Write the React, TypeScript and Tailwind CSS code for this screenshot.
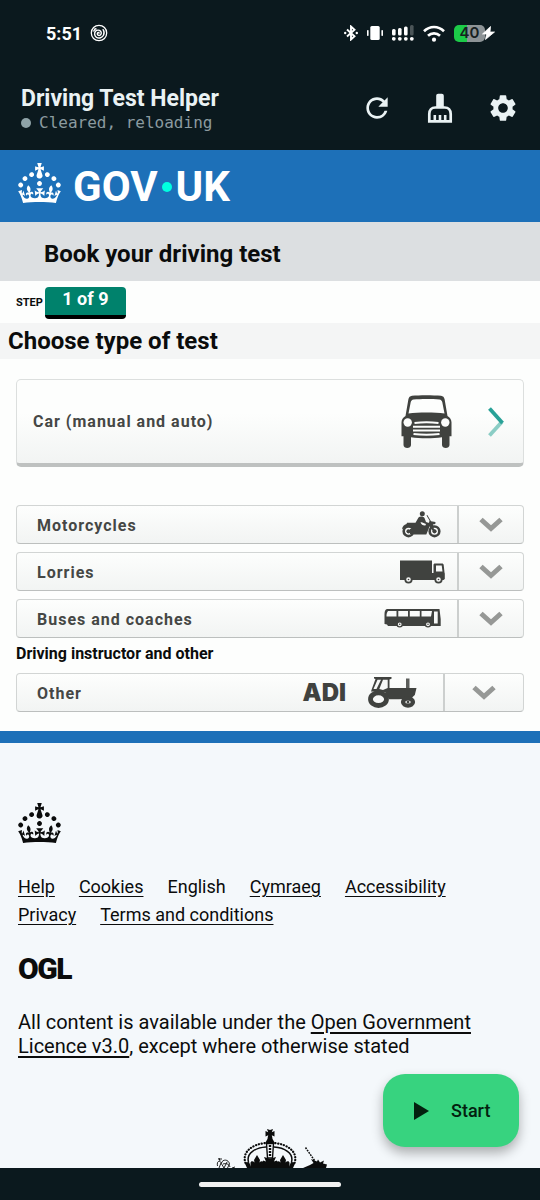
import { MdRefresh, MdSettings } from 'react-icons/md';
import type { ReactNode } from 'react';

const CROWN =
  'M22.6 10.4c-1 .4-2-.1-2.4-1-.4-.9.1-2 1-2.4.9-.4 2 .1 2.4 1s-.1 2-1 2.4m-5.9 6.7c-.9.4-2-.1-2.4-1-.4-.9.1-2 1-2.4.9-.4 2 .1 2.4 1s-.1 2-1 2.4m10.8-3.7c-1 .4-2-.1-2.4-1-.4-.9.1-2 1-2.4.9-.4 2 .1 2.4 1s0 2-1 2.4m3.3 4.8c-1 .4-2-.1-2.4-1-.4-.9.1-2 1-2.4.9-.4 2 .1 2.4 1s-.1 2-1 2.4M17 4.7l2.3 1.2V2.5l-2.3.7-.2-.2.9-3h-3.4l.9 3-.2.2c-.1.1-2.3-.7-2.3-.7v3.4L15 4.7c.1.1.1.2.2.2l-1.3 4c-.1.2-.1.4-.1.6 0 1.1.8 2 1.9 2.2h.7c1-.2 1.9-1.1 1.9-2.1 0-.2 0-.4-.1-.6l-1.3-4c-.1-.2 0-.2.1-.3m-7.6 5.7c.9.4 2-.1 2.4-1 .4-.9-.1-2-1-2.4-.9-.4-2 .1-2.4 1s0 2 1 2.4m-5 3c.9.4 2-.1 2.4-1 .4-.9-.1-2-1-2.4-.9-.4-2 .1-2.4 1s.1 2 1 2.4m-3.2 4.8c.9.4 2-.1 2.4-1 .4-.9-.1-2-1-2.4-.9-.4-2 .1-2.4 1s0 2 1 2.4m14.8 11c4.4 0 8.6.3 12.3.8 1.1-4.5 2.4-7 3.7-8.8l-2.5-.9c.2 1.3.3 1.9 0 2.7-.4-.4-.8-1.1-1.1-2.3l-1.2 4c.7-.5 1.3-.8 2-.9-1.1 2.5-2.6 3.1-3.5 3-1.1-.2-1.7-1.2-1.5-2.1.3-1.2 1.5-1.5 2.1-.1 1.1-2.3-.8-3-2-2.3 1.9-1.9 2.1-3.5.6-5.6-2.1 1.6-2.1 3.2-1.2 5.5-1.2-1.4-3.2-.6-2.5 1.6.9-1.4 2.1-.5 1.9.8-.2 1.1-1.7 2.1-3.5 1.9-2.7-.2-2.9-2.1-2.9-3.6.7-.1 1.9.5 2.9 1.9l.4-4.3c-1.1 1.1-2.1 1.4-3.2 1.4.4-1.2 2.1-3 2.1-3h-5.4s1.7 1.9 2.1 3c-1.1 0-2.1-.2-3.2-1.4l.4 4.3c1-1.4 2.2-2 2.9-1.9-.1 1.5-.2 3.4-2.9 3.6-1.9.2-3.4-.8-3.5-1.9-.2-1.3 1-2.2 1.9-.8.7-2.3-1.2-3-2.5-1.6.9-2.2.9-3.9-1.2-5.5-1.5 2-1.3 3.7.6 5.6-1.2-.7-3.1 0-2 2.3.6-1.4 1.8-1.1 2.1.1.2.9-.3 1.9-1.5 2.1-.9.2-2.4-.5-3.5-3 .6 0 1.2.3 2 .9l-1.2-4c-.3 1.1-.7 1.9-1.1 2.3-.3-.8-.2-1.4 0-2.7l-2.9.9C1.3 23 2.6 25.5 3.7 30c3.7-.5 7.9-.8 12.3-.8';

function Crown() {
  return (
    <svg viewBox="0 0 32 30" className="h-10 w-[43px]" fill="currentColor" aria-hidden="true">
      <path fillRule="evenodd" d={CROWN} />
    </svg>
  );
}

function SpiralIcon() {
  return (
    <svg viewBox="0 0 18 18" className="size-[18px]" fill="none" stroke="currentColor" aria-hidden="true">
      <circle cx="9" cy="9" r="7.7" strokeWidth="1.3" />
      <path
        strokeWidth="1.4"
        strokeLinecap="round"
        d="M9 9.2c.2-1-1.5-1.100-1.700.3-.2 1.500 1.200 2.200 2.400 1.800 1.700-.6 2-2.700.9-4C9.200 5.700 6.800 5.800 5.500 7.300c-1.500 1.900-1 4.700 1 6 2.500 1.400 5.700.5 7-2 1-2 .7-4-.4-5.600"
      />
      <path strokeWidth="1.4" d="M3.500 7.500 5 5l1.500-.3" />
    </svg>
  );
}

function StatusIcons() {
  return (
    <div className="flex items-center gap-[9px]" aria-hidden="true">
      <svg viewBox="0 0 14 16" className="h-4 w-3.5" fill="none" stroke="currentColor" strokeWidth="1.900">
        <path d="M3 4.500 10.500 11.300 7 14.500V1.500l3.500 3.200L3 11.500" />
        <circle cx="1.200" cy="8" r="1.200" fill="currentColor" stroke="none" />
        <circle cx="12.800" cy="8" r="1.200" fill="currentColor" stroke="none" />
      </svg>
      <svg viewBox="0 0 16 14" className="h-3.5 w-4" fill="currentColor">
        <rect x="3.300" y="0" width="9.400" height="14" rx="1.500" />
        <rect x="0" y="4" width="1.600" height="6" rx=".7" />
        <rect x="14.400" y="4" width="1.600" height="6" rx=".7" />
      </svg>
      <svg viewBox="0 0 22 16" className="h-4 w-[22px]" fill="currentColor">
        <rect x="0" y="4" width="3.600" height="6.500" rx="1.500" />
        <rect x="6" y="3" width="3.600" height="7.500" rx="1.500" />
        <rect x="12" y="1.500" width="3.600" height="9" rx="1.500" />
        <rect x="18" y="0" width="3.600" height="10.500" rx="1.500" fill="#4b5558" />
        <circle cx="1.800" cy="13.800" r="1.900" />
        <circle cx="7.800" cy="13.800" r="1.900" />
        <circle cx="13.800" cy="13.800" r="1.900" />
        <circle cx="19.800" cy="13.800" r="1.900" />
      </svg>
      <svg viewBox="0 0 22 17" className="h-[17px] w-[22px]" fill="none" stroke="currentColor" strokeWidth="2.600">
        <path d="M1 6.300c5.800-5.700 14.200-5.700 20 0M5 10.800c3.500-3.300 8.500-3.300 12 0" />
        <circle cx="11" cy="14.700" r="2.100" fill="currentColor" stroke="none" />
      </svg>
      <div className="relative flex items-center">
        <span className="flex h-[17px] w-[31px] items-center justify-center rounded-[5px] bg-linear-to-r from-[#1ccb48] from-42% to-[#8d9396] to-42% font-[Inter] text-[15px] font-semibold text-[#17201f]">
          40
        </span>
        <svg viewBox="0 0 13 14" className="absolute -right-[10px] h-3.5 w-[13px]">
          <path d="M8.500.5.5 8h4L3.500 13.500 12.500 6H8L8.500.5Z" fill="#fff" stroke="#fff" strokeWidth=".8" />
        </svg>
      </div>
    </div>
  );
}

function BrushIcon() {
  return (
    <svg viewBox="0 0 32 32" className="size-8" fill="currentColor" aria-hidden="true">
      <path d="M12.200 4c0-1.300.8-2.200 2-2.200h3.600c1.200 0 2 .9 2 2.200v12h-7.600V4Z" />
      <path d="M5.300 29.300V22c0-4 2.400-6.500 6-6.500h9.400c3.600 0 6 2.500 6 6.500v7.300H5.300Z" fill="none" stroke="currentColor" strokeWidth="2.700" />
      <path d="M9.500 23h2.600v6H9.500zM14.700 23h2.600v6h-2.600zM19.900 23h2.600v6h-2.600z" />
    </svg>
  );
}

function CarIcon() {
  return (
    <svg viewBox="0 0 51 53" className="h-[53px] w-[51px]" fill="#40423f" aria-hidden="true">
      <path
        fillRule="evenodd"
        d="M11 .8C18 .1 32 .1 40 .8c2 .3 3.200 1.500 3.600 3.500L46.500 21c2.500 1.500 4 3.700 4 6.500v13.700H48.500V50c0 4-7.500 4-7.500 0v-7.800c-9 1.400-22 1.400-31 0V50c0 4-7.500 4-7.500 0v-8.800H.5V27.500c0-2.800 1.500-5 4-6.500L7.400 4.300C7.800 2.300 9 1.100 11 .8ZM12.500 4.500C11 4.800 10 5.700 9.700 7.300L7.500 18.500c10-1.300 26-1.300 36 0L41.300 7.300c-.3-1.600-1.300-2.500-2.800-2.800-7-.7-19-.7-26 0Z"
      />
      <circle cx="6.700" cy="27.500" r="4.200" fill="#fcfdfc" />
      <circle cx="44.300" cy="27.500" r="4.200" fill="#fcfdfc" />
      <path
        fill="none"
        stroke="#fcfdfc"
        strokeWidth="1.900"
        d="M13.500 28c7-.9 17-.9 24 0M12 31.800h27M12 35.500h27M12.500 39c8 1 18 1 26 0"
      />
    </svg>
  );
}

function MotorcycleIcon() {
  return (
    <svg viewBox="0 0 39 27" className="h-[27px] w-[39px]" fill="#40423f" aria-hidden="true">
      <circle cx="20.300" cy="2.800" r="2.500" />
      <path d="M16.500 6.500c1.500-1.500 5-1.200 6 .5l1.500 4 3 1 .5-2.500-3-5 .8-.4 3.700 6.200 4.500.7-.2 2-2.500.6 2 3.400-2 1.500-3-3.500-3.500 8.500H12L9 19.500l-5-2.200c-3 0-4 .8-4 .8.500-3 2-4.300 4.500-5.100l.5-1.200h8.500l3-5.300Z" />
      <path d="M18.500 11.500c1.500-.8 3.500 1.200 5.500 1.400l-.6 1.600c-2.500.2-4-.8-4.900-3Z" fill="#fbfcfb" />
      <circle cx="6.500" cy="20.300" r="4.800" fill="#fbfcfb" stroke="#40423f" strokeWidth="2.600" />
      <circle cx="32.500" cy="20.300" r="4.800" fill="#fbfcfb" stroke="#40423f" strokeWidth="2.600" />
      <circle cx="6.500" cy="20.300" r="2.100" />
      <circle cx="32.500" cy="20.300" r="2.100" />
      <path d="m26.500 12 6 8.300" fill="none" stroke="#40423f" strokeWidth="2.200" />
      <path d="M8 18h7v5H8z" />
    </svg>
  );
}

function LorryIcon() {
  return (
    <svg viewBox="0 0 45 24" className="h-6 w-[45px]" fill="#40423f" aria-hidden="true">
      <path
        fillRule="evenodd"
        d="M0 .5h32V13h1.500V5c0-1 .5-1.500 1.500-1.500h7c1 0 1.500.5 1.700 1.500l.8 7.500.3 1V19l-1.300 1H0V.5ZM36 5.500v6h6.500L41.700 5.500H36Z"
      />
      <circle cx="8.500" cy="19.500" r="3.200" fill="#f7f8f7" stroke="#40423f" strokeWidth="1.800" />
      <circle cx="38.500" cy="19.500" r="3.200" fill="#f7f8f7" stroke="#40423f" strokeWidth="1.800" />
      <circle cx="8.500" cy="19.500" r=".8" />
      <circle cx="38.500" cy="19.500" r=".8" />
    </svg>
  );
}

function BusIcon() {
  return (
    <svg viewBox="0 0 57 19" className="h-[19px] w-[57px]" fill="#40423f" aria-hidden="true">
      <path
        fillRule="evenodd"
        d="M3 0h52.500l1.200 10v7H4l-1-1.500L.5 15V5C.5 2 1.500.6 3 0ZM2.500 7.500l10-.1V2H4C2.800 3.500 2.500 5 2.500 7.500ZM14.300 2v5.500H24V2h-9.700ZM25.800 2v5.500h10V2h-10ZM37.500 2v5.500H47L48 2H37.500ZM50 2.500v12h3.700v-12H50Z"
      />
      <circle cx="15.700" cy="15.300" r="2.600" fill="#f7f8f7" stroke="#40423f" strokeWidth="1.400" />
      <circle cx="44" cy="15.300" r="2.600" fill="#f7f8f7" stroke="#40423f" strokeWidth="1.400" />
      <circle cx="15.700" cy="15.300" r=".8" />
      <circle cx="44" cy="15.300" r=".8" />
    </svg>
  );
}

function TractorIcon() {
  return (
    <svg viewBox="0 0 49 31" className="h-[31px] w-[49px]" fill="#40423f" aria-hidden="true">
      <path d="M6 0h17.500v1.800L21.500 2.500V11H48.500l-1.700 7-3.800 3.500-12 .8H21L17 15 3 14.500l1-3L7.500 2 6 1.500V0Z" />
      <path d="M9.500 2.800h3.500L8.500 12H5.500L9.500 2.800ZM15 2.800h4.700V11l-4.700 2-3.700-1L15 2.800Z" fill="#f7f8f7" />
      <path d="M38 1.500h3.500V11H38z" fill="#5b5d5a" />
      <ellipse cx="10.500" cy="22.200" rx="8" ry="6.300" fill="#f7f8f7" stroke="#40423f" strokeWidth="4.800" />
      <ellipse cx="40" cy="25" rx="5" ry="3.600" fill="#d5d7d5" stroke="#40423f" strokeWidth="4.200" />
      <circle cx="40" cy="25" r="1.200" />
    </svg>
  );
}

function RoyalArms() {
  return (
    <svg viewBox="0 0 108 39" className="h-[39px] w-[108px] overflow-visible" fill="#0b0c0c" aria-hidden="true">
      <path d="m51 0 3 1 3-1-1.200 3.300L58.500 2v5.500l-2.700-1.200.7 3.200h-5l.7-3.200L49.500 7.500V2l2.700 1.300L51 0Z" />
      <path d="M52 9h4l2.500 4.500-1 2.500h-7l-1-2.500L52 9Z" />
      <path d="M50.500 14.500h7L56.500 29h-5l-1-14.500Z" fill="#f4f8fb" stroke="#0b0c0c" strokeWidth="1.400" />
      <path d="M54 16v12" fill="none" stroke="#0b0c0c" strokeWidth="2.400" strokeDasharray="2 1" />
      <path
        d="M29.500 34c-4-11 7-19 20.500-20M78.500 34c4-11-7-19-20.500-20"
        fill="none"
        stroke="#0b0c0c"
        strokeWidth="2.200"
        strokeLinecap="round"
        strokeDasharray=".2 2.700"
      />
      <path d="M32.500 33C30 24 40 18.500 50 18M75.500 33C78 24 68 18.500 58 18" fill="none" stroke="#0b0c0c" strokeWidth="1.500" />
      <path d="m48 28 6 1.800 6-1.800-2 4.500 3-1v7.500H47v-7.500l3 1L48 28Z" />
      <path d="M41 26l3 5-.5 2.500c1.500-1.800 3.500-1.500 4 .2V39H34.500v-5.300c.5-1.700 2.500-2 4-.2L38 31l3-5ZM67 26l3 5-.5 2.500c1.500-1.800 3.500-1.500 4 .2V39H60.500v-5.300c.5-1.700 2.500-2 4-.2L64 31l3-5Z" />
      <path d="M28.500 33.500 33 33l2.500 6H31l-2.500-5.500ZM79.500 33.500 75 33l-2.500 6H77l2.500-5.500Z" />
      <g fill="none" stroke="#0b0c0c" strokeWidth=".9">
        <path d="M1.500 37c-1-5 2-6 4-3 1-4 7-4 8 1l-2 4M3 39l2-5 3 5 3-6" />
        <path d="m3 29 1 3m-2-2h4M7 35c3-1 6 0 7 3M16 39l3-1" />
        <path d="m89.500 18.500 9 13" strokeWidth="1.500" strokeDasharray="1.800 1" />
      </g>
      <path d="M95 30l6 2.500 1-2 2 3 4-2-1 3 4 1-1 3.500H87l7-3 3.500-2L95 30Z" />
    </svg>
  );
}

function DownChevron() {
  return (
    <svg viewBox="0 0 24 16" className="h-4 w-6" aria-hidden="true">
      <path d="m2 2.500 10 9 10-9" fill="none" stroke="#969896" strokeWidth="5" />
    </svg>
  );
}

function TestRow({ label, wide, children }: { label: string; wide?: boolean; children: ReactNode }) {
  return (
    <button className="flex h-[39px] w-full items-stretch rounded-[4px] border border-[#d2d5d4] border-b-[#bcbfbe] bg-linear-to-b from-[#fdfefd] to-[#f2f4f3] pl-5 text-left">
      <span className="flex flex-1 items-center pt-0.5 text-base font-bold tracking-[1px] text-[#454745]">{label}</span>
      <span className={wide ? 'flex items-center gap-[22px] pr-[26px]' : 'flex items-center'}>{children}</span>
      <span
        className={
          wide
            ? 'flex w-20 items-center justify-center border-l-2 border-[#cccfce]'
            : 'ml-4 flex w-[66px] items-center justify-center border-l-2 border-[#cccfce]'
        }
      >
        <DownChevron />
      </span>
    </button>
  );
}

const footerLinks = [
  { label: 'Help', link: true },
  { label: 'Cookies', link: true },
  { label: 'English', link: false },
  { label: 'Cymraeg', link: true },
  { label: 'Accessibility', link: true },
  { label: 'Privacy', link: true },
  { label: 'Terms and conditions', link: true },
];

function App() {
  return (
    <div className="relative flex h-screen w-full flex-col overflow-hidden bg-[#0b191e] font-[Roboto,sans-serif]">
      <div className="flex h-[66px] shrink-0 items-center justify-between pr-[55px] pl-[46px] text-white">
        <div className="flex items-center gap-2">
          <span className="text-[18px] font-bold">5:51</span>
          <SpiralIcon />
        </div>
        <StatusIcons />
      </div>

      <header className="flex h-[84px] shrink-0 items-center justify-between px-[21px] text-[#eaf2f4]">
        <div>
          <h1 className="pt-0.5 text-[23px] leading-7 font-bold">Driving Test Helper</h1>
          <p className="flex items-center gap-2 font-['DejaVu_Sans_Mono',monospace] text-base leading-5 text-[#8b9ba0]">
            <span className="size-[10px] rounded-full bg-[#8fa3a8]" />
            Cleared, reloading
          </p>
        </div>
        <div className="flex items-center gap-[31px]">
          <button aria-label="Reload">
            <MdRefresh className="size-8" />
          </button>
          <button aria-label="Clear data">
            <BrushIcon />
          </button>
          <button aria-label="Settings">
            <MdSettings className="size-8" />
          </button>
        </div>
      </header>

      <main className="relative flex-1 overflow-hidden bg-[#fdfefd] text-[#0b0c0c]">
        <a href="#" aria-label="GOV.UK" className="flex h-[72px] items-center gap-3 bg-[#1d70b8] px-[18px] text-white">
          <span className="pb-1.5">
            <Crown />
          </span>
          <span className="flex items-center pt-0.5 text-[42px] leading-none font-bold">
            GOV
            <span className="mx-1 size-[10px] rounded-full bg-[#00ffe0]" />
            UK
          </span>
        </a>

        <div className="flex h-[59px] items-center bg-[#dcdfe1] px-11 pt-1">
          <h2 className="text-2xl font-bold">Book your driving test</h2>
        </div>

        <div className="flex h-[42px] items-center gap-[2px] px-4 pt-0.5">
          <span className="text-[11px] font-bold">STEP</span>
          <span className="flex h-8 w-[81px] justify-center rounded-[4px] border-b-4 border-black bg-[#00826c] text-lg leading-6 font-bold text-white">
            1 of 9
          </span>
        </div>

        <h3 className="bg-[#f4f5f5] px-2 text-2xl leading-9 font-bold">Choose type of test</h3>

        <div className="px-4 pt-5 pb-[19px]">
          <button className="flex h-[88px] w-full items-center rounded-[5px] border border-b-4 border-[#dcdfde] border-b-[#bec1c0] bg-linear-to-b from-[#fdfefd] from-40% to-[#f2f4f3] pr-[19px] pl-4 text-left">
            <span className="flex-1 text-base font-bold tracking-[1px] text-[#454745]">Car (manual and auto)</span>
            <CarIcon />
            <svg viewBox="0 0 16 30" className="ml-9 h-[30px] w-4" fill="none" strokeWidth="3.800" aria-hidden="true">
              <path d="M1.500 28.500 13.800 15" stroke="#8bcdc5" />
              <path d="M1.500 1.500 14.500 16" stroke="#28a197" />
            </svg>
          </button>

          <div className="mt-[38px] flex flex-col gap-2">
            <TestRow label="Motorcycles">
              <MotorcycleIcon />
            </TestRow>
            <TestRow label="Lorries">
              <span className="-mr-1">
                <LorryIcon />
              </span>
            </TestRow>
            <TestRow label="Buses and coaches">
              <BusIcon />
            </TestRow>
          </div>

          <h4 className="pt-1 pb-[7px] text-base leading-6 font-bold">Driving instructor and other</h4>
          <TestRow label="Other" wide>
            <span className="font-[Inter,sans-serif] text-2xl leading-none font-black text-[#40423f]">ADI</span>
            <TractorIcon />
          </TestRow>
        </div>

        <footer className="border-t-[12px] border-[#1d70b8] bg-[#f4f8fb] px-[18px] pt-[60px]">
          <Crown />
          <nav className="mt-[30px] flex flex-wrap gap-x-6 text-lg leading-7">
            {footerLinks.map((item) =>
              item.link ? (
                <a key={item.label} href="#" className="underline underline-offset-3">
                  {item.label}
                </a>
              ) : (
                <span key={item.label}>{item.label}</span>
              )
            )}
          </nav>
          <p className="mt-6 text-[30px] leading-8 font-black tracking-tighter">OGL</p>
          <p className="mt-[25px] text-xl leading-6">
            All content is available under the{' '}
            <a href="#" className="underline underline-offset-3">
              Open Government Licence v3.0
            </a>
            , except where otherwise stated
          </p>
          <div className="mt-[71px] flex justify-center">
            <RoyalArms />
          </div>
        </footer>

        <button className="absolute right-[21px] bottom-[21px] flex h-[73px] w-[136px] items-center gap-[22px] rounded-[22px] bg-[#37d37f] pl-[31px] text-lg font-medium text-[#03210f] shadow-[0_6px_12px_rgba(0,0,0,0.3)]">
          <svg viewBox="0 0 15 18" className="h-[18px] w-[15px]" fill="currentColor" aria-hidden="true">
            <path d="M0 0v18l15-9z" />
          </svg>
          Start
        </button>
      </main>

      <div className="flex h-8 shrink-0 items-center justify-center">
        <span className="h-[5px] w-[142px] rounded-full bg-[#f1f1f1]" />
      </div>
    </div>
  );
}

export default App;
